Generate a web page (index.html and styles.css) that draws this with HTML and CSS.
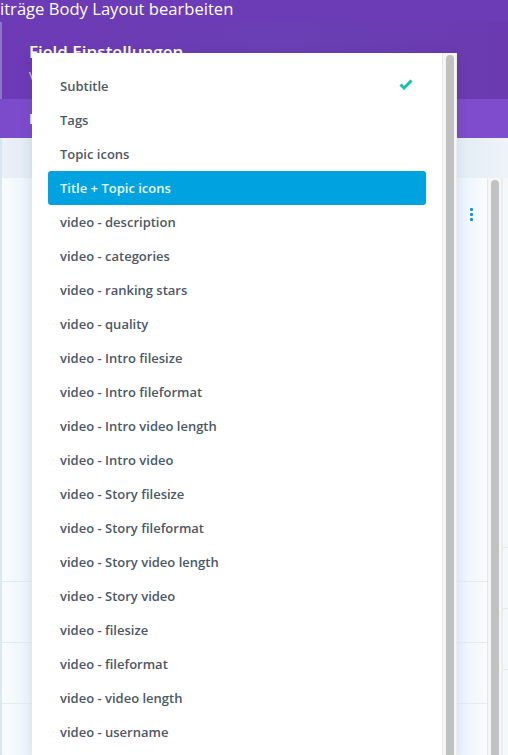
FILE: index.html
```html
<!DOCTYPE html>
<html lang="de">
<head>
<meta charset="utf-8">
<link rel="stylesheet" href="styles.css">
</head>
<body>
<div class="page">
  <div class="topbar">iträge Body Layout bearbeiten</div>
  <div class="modal">
    <div class="modal-head">
      <div class="title">Field Einstellungen</div>
      <div class="subtitle">Verknüpfung</div>
    </div>
    <div class="tabs"><span class="tab">Inhalt</span></div>
    <div class="toolbar"></div>
    <div class="body">
      <div class="main">
        <div class="row row-first">
          <span class="dots"><i></i><i></i><i></i></span>
        </div>
        <div class="row"></div>
        <div class="row"></div>
        <div class="row row-last"></div>
      </div>
      <div class="scroll scroll-body"><div class="thumb"></div></div>
      <div class="side">
        <div class="side-row s1"></div>
        <div class="side-row"></div>
        <div class="side-row"></div>
        <div class="side-row last"></div>
      </div>
    </div>
  </div>

  <div class="dropdown">
    <ul class="options">
      <li class="opt">Subtitle <svg class="check" width="14" height="11" viewBox="0 0 14 11"><path d="M1.5 5.5 L5 9 L12.5 1.5" fill="none" stroke="#16c2a8" stroke-width="3"/></svg></li>
      <li class="opt">Tags</li>
      <li class="opt">Topic icons</li>
      <li class="opt active">Title + Topic icons</li>
      <li class="opt">video - description</li>
      <li class="opt">video - categories</li>
      <li class="opt">video - ranking stars</li>
      <li class="opt">video - quality</li>
      <li class="opt">video - Intro filesize</li>
      <li class="opt">video - Intro fileformat</li>
      <li class="opt">video - Intro video length</li>
      <li class="opt">video - Intro video</li>
      <li class="opt">video - Story filesize</li>
      <li class="opt">video - Story fileformat</li>
      <li class="opt">video - Story video length</li>
      <li class="opt">video - Story video</li>
      <li class="opt">video - filesize</li>
      <li class="opt">video - fileformat</li>
      <li class="opt">video - video length</li>
      <li class="opt">video - username</li>
    </ul>
    <div class="scroll scroll-dd"><div class="thumb"></div></div>
  </div>
</div>
</body>
</html>
```

FILE: styles.css
```css
* { box-sizing: border-box; }
html, body { margin: 0; padding: 0; }
body {
  width: 508px;
  height: 755px;
  overflow: hidden;
  font-family: "Open Sans", "Noto Sans", sans-serif;
  background: #f4f8fc;
}
.page {
  position: relative;
  width: 508px;
  height: 755px;
  overflow: hidden;
  display: flex;
  flex-direction: column;
}
.topbar {
  height: 22px;
  flex: none;
  background: #6b3cb6;
  color: #fff;
  font-size: 16.6px;
  line-height: 18px;
  white-space: nowrap;
}
.modal {
  flex: 1;
  display: flex;
  flex-direction: column;
  min-height: 0;
}
.modal-head {
  height: 77px;
  flex: none;
  background: linear-gradient(90deg, #6d3ab5 0%, #6a3fb4 60%, #6b3ab0 100%);
  border-left: 2px solid #8f74cc;
  padding: 18px 0 0 27px;
  color: #fff;
}
.title {
  font-size: 17px;
  font-weight: 600;
  line-height: 24px;
}
.subtitle {
  font-size: 13px;
  line-height: 20px;
  margin-top: 2px;
  color: rgba(255,255,255,0.75);
}
.tabs {
  height: 39px;
  flex: none;
  background: linear-gradient(90deg, #7c4bcc 0%, #7e4ccc 100%);
  padding-left: 29px;
  display: flex;
  align-items: center;
}
.tab {
  color: #fff;
  font-size: 14px;
  font-weight: 600;
}
.toolbar {
  height: 40px;
  flex: none;
  background: linear-gradient(90deg, #edf0f8 0%, #dfeaf4 6%, #e7eff7 50%, #e2edf5 90%, #eef3f9 100%);
  border-left: 2px solid #d6e6f3;
}
.body {
  flex: 1;
  display: flex;
  min-height: 0;
}
.main {
  width: 487px;
  flex: none;
  display: flex;
  flex-direction: column;
  border-left: 2px solid #d9e8f5;
  background: linear-gradient(90deg, #fbfdff 0px, #e8f2fb 30px, #e8f2fb 455px, #fafcff 485px);
}
.row {
  height: 61px;
  flex: none;
  border-bottom: 1px solid #e2ebf3;
  position: relative;
}
.row-first { height: 404px; }
.row-last { flex: 1; border-bottom: 0; }
.dots {
  position: absolute;
  left: 468px;
  top: 30px;
  display: flex;
  flex-direction: column;
  gap: 2px;
}
.dots i {
  display: block;
  width: 3px;
  height: 3px;
  background: #1a8ddc;
  border-radius: 1px;
}
.scroll {
  width: 15px;
  flex: none;
  background: #f6f6f6;
  border-left: 1px solid #e6e6e6;
  border-right: 1px solid #ececec;
  padding: 2px 2px 0 3px;
}
.thumb {
  width: 8px;
  height: 100%;
  background: #c1c1c1;
  border-radius: 4px 4px 0 0;
}
.side {
  flex: 1;
  display: flex;
  flex-direction: column;
  background: #f4f7fb;
  border-left: 1px solid #e8edf2;
}
.side-row {
  height: 61px;
  flex: none;
  border-bottom: 1px solid #e2eaf2;
}
.side-row.s1 { height: 370px; }
.side-row.last { flex: 1; border-bottom: 0; }

.dropdown {
  position: absolute;
  left: 32px;
  top: 53px;
  width: 425px;
  height: 702px;
  background: #fff;
  display: flex;
  box-shadow: 0 2px 12px rgba(0,0,0,0.08);
}
.options {
  list-style: none;
  margin: 0;
  padding: 16px 16px 0 16px;
  flex: 1;
}
.opt {
  height: 34px;
  display: flex;
  align-items: center;
  justify-content: space-between;
  padding: 0 13px 0 12px;
  font-size: 13px;
  font-weight: 600;
  color: #4c5866;
  border-radius: 3px;
  white-space: nowrap;
}
.opt.active {
  background: #00a3e0;
  color: #e8f6fc;
}
.check { margin-top: -4px; }
.scroll-dd {
  padding-top: 2px;
}
```
